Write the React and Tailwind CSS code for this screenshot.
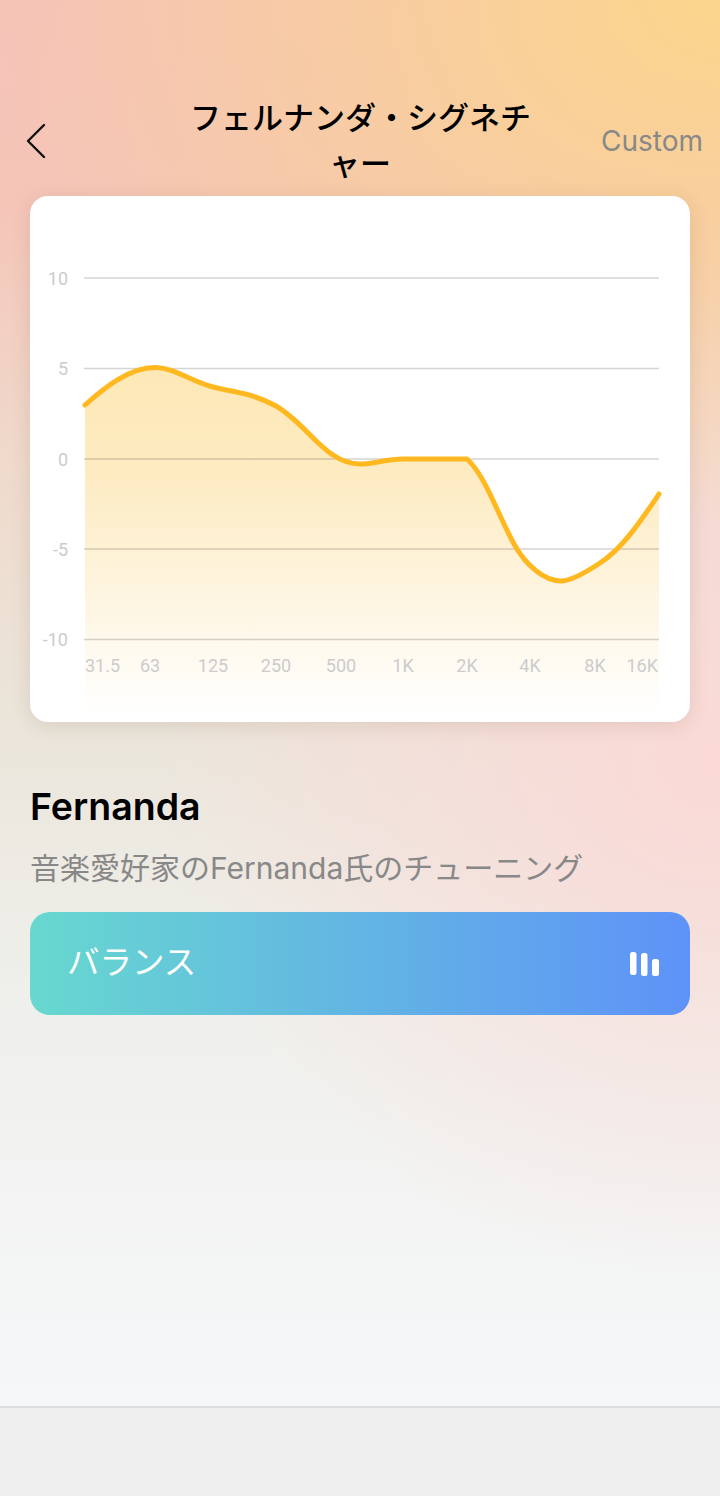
const CURVE = 'M85 405 C105 387 130 367 156 367.5 C175 368 190 381 213 387 C232 392 250 392 276 406 C300 420 315 444 333 455 C342 461 350 464 360 464 C375 464 385 459 403 459 L467 459 C485 475 498 515 514 544 C526 566 545 581 561 581 C572 581 588 571 600 563 C622 549 640 522 659 494';

const Y_LABELS = [
  { label: '10', y: 278 },
  { label: '5', y: 368.5 },
  { label: '0', y: 459 },
  { label: '-5', y: 549 },
  { label: '-10', y: 639.5 },
];

const X_LABELS = [
  { label: '31.5', x: 85, anchor: 'start' },
  { label: '63', x: 150 },
  { label: '125', x: 213 },
  { label: '250', x: 276 },
  { label: '500', x: 341 },
  { label: '1K', x: 403 },
  { label: '2K', x: 467 },
  { label: '4K', x: 530 },
  { label: '8K', x: 595 },
  { label: '16K', x: 658, anchor: 'end' },
];

function EqChart() {
  return (
    <svg viewBox="30 196 660 526" className="block w-full h-full" style={{ fontFamily: 'Roboto, sans-serif' }}>
      <defs>
        <linearGradient id="fade" x1="0" y1="366" x2="0" y2="715" gradientUnits="userSpaceOnUse">
          <stop offset="0" stopColor="#fde8b6" />
          <stop offset="0.3" stopColor="#fdebc1" />
          <stop offset="1" stopColor="#ffffff" />
        </linearGradient>
      </defs>

      <path d={`${CURVE} L659 715 L85 715 Z`} fill="url(#fade)" />

      {Y_LABELS.map((t) => (
        <g key={t.label}>
          <line x1="84" x2="659" y1={t.y} y2={t.y} stroke="rgba(0,0,0,0.17)" strokeWidth="1.3" />
          <text x="68" y={t.y + 6.5} textAnchor="end" fontSize="18" fill="#cccccc">{t.label}</text>
        </g>
      ))}

      <path d={CURVE} fill="none" stroke="#ffb81f" strokeWidth="5" strokeLinecap="round" strokeLinejoin="round" />

      {X_LABELS.map((t) => (
        <text key={t.label} x={t.x} y="672" textAnchor={t.anchor || 'middle'} fontSize="18" fill="#cccccc">{t.label}</text>
      ))}
    </svg>
  );
}

export default function App() {
  return (
    <div
      className="w-[720px] h-[1496px] flex flex-col bg-[radial-gradient(ellipse_720px_520px_at_100%_0%,#fbd58c_0%,rgba(251,213,140,0)_100%),radial-gradient(ellipse_560px_520px_at_100%_760px,#fbd9d6_0%,rgba(251,217,214,0)_100%),linear-gradient(180deg,#f6c3b8_0px,#f5c5b8_200px,#efd9cb_450px,#ebe5da_720px,#eff0ec_1000px,#f6f7f9_1400px)]"
      style={{ fontFamily: 'Inter, "Noto Sans CJK JP", sans-serif' }}
    >
      <div className="flex-1 px-[30px] pt-[95px]">
        <div className="-mx-[30px] grid grid-cols-[1fr_340px_1fr] items-center h-[92px] mb-[9px]">
          <svg viewBox="0 0 24 36" className="w-[24px] h-[36px] ml-[24px]" fill="none" stroke="#111" strokeWidth="2.4" strokeLinecap="round" strokeLinejoin="round">
            <path d="M20 2 L4 18 L20 34" />
          </svg>
          <h1 className="text-[31px] leading-[46px] font-medium text-black text-center whitespace-nowrap">
            フェルナンダ・シグネチ<br />ャー
          </h1>
          <span className="justify-self-end pr-[17px] text-[28px] text-[#888888]">Custom</span>
        </div>

        <div className="h-[526px] rounded-[18px] bg-white shadow-[0_4px_20px_rgba(90,60,30,0.13)] overflow-hidden">
          <EqChart />
        </div>

        <h2 className="mt-[61px] text-[37.5px] leading-[48px] font-semibold text-black">Fernanda</h2>
        <p className="mt-[17px] text-[30px] leading-[40px] text-[#888888] whitespace-nowrap">音楽愛好家のFernanda氏のチューニング</p>

        <div className="mt-[24px] h-[103px] rounded-[20px] pl-[37px] pr-[31px] flex items-center justify-between bg-[linear-gradient(90deg,#67d8cf,#5e92f8)]">
          <span className="text-[32.5px] text-white">バランス</span>
          <svg viewBox="0 0 29 24" className="w-[29px] h-[24px]" fill="#fff">
            <rect x="0" y="0" width="6.5" height="23" rx="2.5" />
            <rect x="11" y="1" width="6.5" height="23" rx="2.5" />
            <rect x="22" y="7" width="7" height="17" rx="2.5" />
          </svg>
        </div>
      </div>

      <div className="h-[90px] border-t-2 border-[#dedede] bg-[#efefef]" />
    </div>
  );
}
